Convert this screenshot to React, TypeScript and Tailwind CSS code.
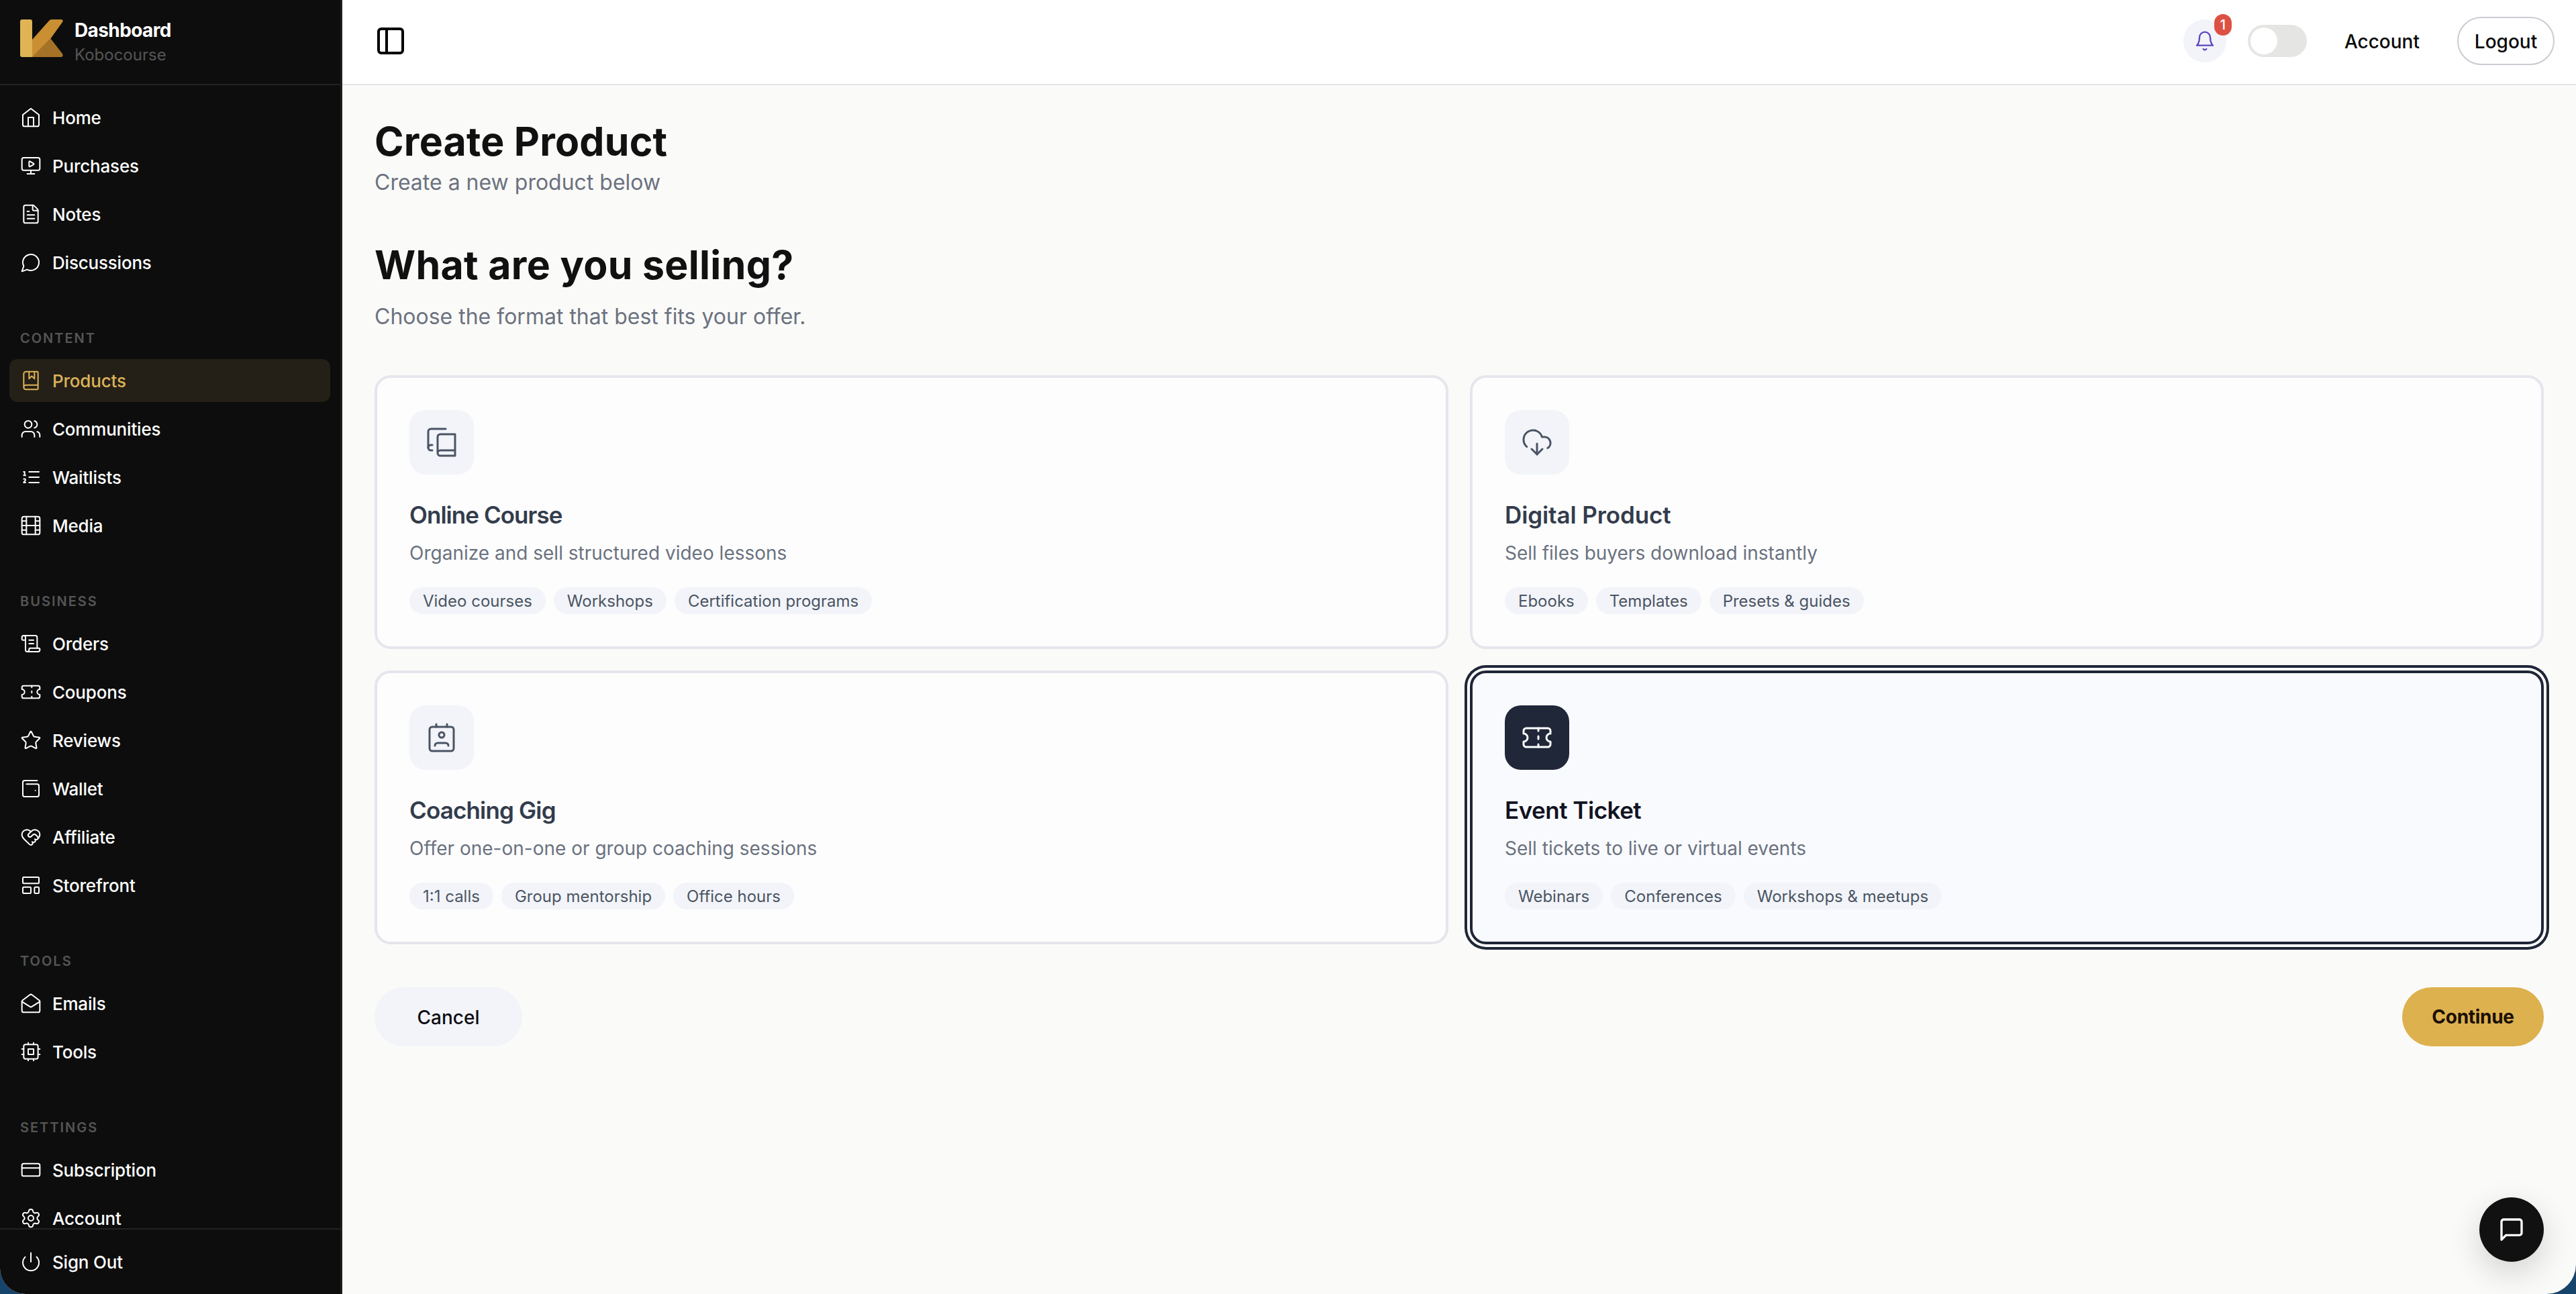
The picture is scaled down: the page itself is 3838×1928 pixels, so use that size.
import type { ReactNode } from 'react';
import {
    BookMarked, CloudDownload, CreditCard, FileText, HeartHandshake, LayoutTemplate,
    MailOpen, MonitorPlay, PanelLeft, Power, ScrollText, Settings, Star, Ticket, Users, WalletMinimal,
} from 'lucide-react';
import { FiBell, FiFilm, FiHome, FiMessageSquare } from 'react-icons/fi';

type IconProps = { className?: string; strokeWidth?: number | string };

function Svg({ className, strokeWidth = 1.5, children }: IconProps & { children: ReactNode }) {
    return (
        <svg viewBox="0 0 24 24" fill="none" stroke="currentColor" strokeWidth={strokeWidth}
        strokeLinecap="round" strokeLinejoin="round" className={className}>
            {children}
        </svg>
    )
}

function Chat(props: IconProps) {
    return <Svg {...props}><path d="M7.9 20A9 9 0 1 0 4 16.1L2 22Z" /></Svg>
}

function Books(props: IconProps) {
    return (
        <Svg {...props}>
            <path d="M2 16V4a2 2 0 0 1 2-2h11" />
            <path d="M5 14H4a2 2 0 1 0 0 4h1" />
            <path d="M22 18H11a2 2 0 1 0 0 4h11V6H11a2 2 0 0 0-2 2v12" />
        </Svg>
    )
}

function OrderedList(props: IconProps) {
    return (
        <Svg {...props}>
            <path d="M10 6h11M10 12h11M10 18h11M4 6h1v4M4 10h2M6 18H4c0-1 2-2 2-3s-1-1.5-2-1" />
        </Svg>
    )
}

function Chip(props: IconProps) {
    return (
        <Svg {...props}>
            <rect x="4" y="4" width="16" height="16" rx="2" />
            <rect x="9" y="9" width="6" height="6" />
            <path d="M15 2v2M15 20v2M2 15h2M2 9h2M20 15h2M20 9h2M9 2v2M9 20v2" />
        </Svg>
    )
}

function ContactCard(props: IconProps) {
    return (
        <Svg {...props}>
            <path d="M17 18a2 2 0 0 0-2-2H9a2 2 0 0 0-2 2M8 2v2M16 2v2" />
            <rect x="3" y="4" width="18" height="18" rx="2" />
            <circle cx="12" cy="10" r="2" />
        </Svg>
    )
}

const groups = [
    {
        label: '',
        items: [
            { name: 'Home', Icon: FiHome },
            { name: 'Purchases', Icon: MonitorPlay },
            { name: 'Notes', Icon: FileText },
            { name: 'Discussions', Icon: Chat },
        ],
    },
    {
        label: 'CONTENT',
        items: [
            { name: 'Products', Icon: BookMarked },
            { name: 'Communities', Icon: Users },
            { name: 'Waitlists', Icon: OrderedList },
            { name: 'Media', Icon: FiFilm },
        ],
    },
    {
        label: 'BUSINESS',
        items: [
            { name: 'Orders', Icon: ScrollText },
            { name: 'Coupons', Icon: Ticket },
            { name: 'Reviews', Icon: Star },
            { name: 'Wallet', Icon: WalletMinimal },
            { name: 'Affiliate', Icon: HeartHandshake },
            { name: 'Storefront', Icon: LayoutTemplate },
        ],
    },
    {
        label: 'TOOLS',
        items: [
            { name: 'Emails', Icon: MailOpen },
            { name: 'Tools', Icon: Chip },
        ],
    },
    {
        label: 'SETTINGS',
        items: [
            { name: 'Subscription', Icon: CreditCard },
            { name: 'Account', Icon: Settings },
        ],
    },
];

const products = [
    {
        title: 'Online Course',
        text: 'Organize and sell structured video lessons',
        tags: ['Video courses', 'Workshops', 'Certification programs'],
        Icon: Books,
        tracking: 'tracking-[-0.95px]',
    },
    {
        title: 'Digital Product',
        text: 'Sell files buyers download instantly',
        tags: ['Ebooks', 'Templates', 'Presets & guides'],
        Icon: CloudDownload,
        tracking: 'tracking-[-0.1px]',
    },
    {
        title: 'Coaching Gig',
        text: 'Offer one-on-one or group coaching sessions',
        tags: ['1:1 calls', 'Group mentorship', 'Office hours'],
        Icon: ContactCard,
        tracking: 'tracking-[-0.85px]',
    },
    {
        title: 'Event Ticket',
        text: 'Sell tickets to live or virtual events',
        tags: ['Webinars', 'Conferences', 'Workshops & meetups'],
        Icon: Ticket,
        tracking: 'tracking-[-0.5px]',
        selected: true,
    },
];

function Logo() {
    return (
        <svg viewBox="0 0 64 56" className="h-14 w-16 shrink-0">
            <path d="M43 2Q44.500 0 47 0H61Q65 0 63 4L45 29L19 56H18V30Z" fill="#c98f32" />
            <path d="M45 28L63 51Q65 56 60 56H18Z" fill="#a57327" />
            <path d="M3 0H15Q18 0 18 3V56H3Q0 56 0 53V3Q0 0 3 0Z" fill="#deb454" />
        </svg>
    )
}

function NavItem({ name, Icon, active }: { name: string; Icon: any; active?: boolean }) {
    return (
        <a className={`flex h-16 shrink-0 items-center gap-4 rounded-xl px-4 text-[26px] font-medium tracking-[-0.2px] ${active ? 'bg-[#242017] text-[#ddb35a]' : 'text-white'}`}>
            <Icon className="size-8 shrink-0" strokeWidth={1.5} />
            <span>{name}</span>
        </a>
    )
}

function Sidebar() {
    return (
        <aside className="flex w-[510px] shrink-0 flex-col border-r-3 border-[#1e1e1e] bg-[#0d0d0d]">
            <div className="flex h-[127px] shrink-0 items-start gap-[17px] border-b-2 border-[#232323] pt-[29px] pl-[30px]">
                <Logo />
                <div className="flex flex-col">
                    <span className="text-[28px] leading-8 font-bold tracking-[-0.6px] text-white">Dashboard</span>
                    <span className="mt-[5px] text-2xl leading-8 text-[#555555]">Kobocourse</span>
                </div>
            </div>
            <nav className="flex min-h-0 flex-1 flex-col overflow-hidden pt-4 pr-[15px] pl-3.5">
                {groups.map((group, i) => (
                    <div key={i} className="flex shrink-0 flex-col">
                        {group.label && (
                            <div className="mt-12 flex h-16 shrink-0 items-center px-4 pt-0.5 text-xl font-semibold tracking-[0.1em] text-[#555555]">
                                {group.label}
                            </div>
                        )}
                        <div className="flex flex-col gap-2">
                            {group.items.map((item) => (
                                <NavItem key={item.name} name={item.name} Icon={item.Icon} active={item.name === 'Products'} />
                            ))}
                        </div>
                    </div>
                ))}
            </nav>
            <div className="h-[98px] shrink-0 border-t-2 border-[#232323] pt-4 pr-[15px] pl-3.5">
                <NavItem name="Sign Out" Icon={Power} />
            </div>
        </aside>
    )
}

function Header() {
    return (
        <header className="flex h-[127px] shrink-0 items-center justify-between border-b-2 border-[#e3e3e5] bg-white pr-8 pb-[3px] pl-12">
            <PanelLeft className="size-12" strokeWidth={2} />
            <div className="flex items-center">
                <div className="relative flex size-16 items-center justify-center rounded-full bg-[#f2f4fa] text-[#6046bd]">
                    <FiBell className="size-8" strokeWidth={1.8} />
                    <span className="absolute -top-2 left-[46px] flex h-8 w-[26px] items-center justify-center rounded-full bg-[#dd5144] text-xl font-medium text-white">1</span>
                </div>
                <div className="ml-8 flex h-12 w-[88px] items-center rounded-full bg-[#e5e5e4] p-1">
                    <div className="size-10 rounded-full bg-white" />
                </div>
                <span className="ml-14 pt-0.5 text-[28px] font-medium text-[#0a0a0a]">Account</span>
                <button className="ml-14 h-[72px] w-[145px] rounded-full border-2 border-[#cbcbd3] pt-0.5 text-[28px] font-medium text-[#0a0a0a]">Logout</button>
            </div>
        </header>
    )
}

function ProductCard({ title, text, tags, Icon, tracking, selected }: { title: string; text: string; tags: string[]; Icon: any; tracking: string; selected?: boolean }) {
    return (
        <div className={`flex h-[408px] flex-col items-start rounded-3xl border-4 p-12 ${selected ? 'border-[#1f2637] bg-[#f9fafe] ring-4 ring-[#1f2637] ring-offset-4 ring-offset-white' : 'border-[#e5e6ed] bg-[#fdfdfd]'}`}>
            <div className={`flex size-24 shrink-0 items-center justify-center rounded-3xl ${selected ? 'bg-[#1f2738] text-white' : 'bg-[#f2f4f9] text-[#4a5464]'}`}>
                <Icon className="size-12" strokeWidth={1.5} />
            </div>
            <h3 className={`mt-8 text-[35px] leading-[56px] font-semibold ${tracking} ${selected ? 'text-[#111322]' : 'text-[#333c4c]'}`}>{title}</h3>
            <p className="mt-[9px] text-[28px] leading-10 text-[#6b7280]">{text}</p>
            <div className="mt-[31px] flex gap-3">
                {tags.map((tag) => (
                    <span key={tag} className="flex h-10 items-center rounded-full bg-[#f2f4f9] px-5 pt-0.5 text-2xl text-[#4b5563]">{tag}</span>
                ))}
            </div>
        </div>
    )
}

export default function App() {
    return (
        <div className="h-[1928px] w-[3838px] bg-[#17446b]">
            <div className="relative flex h-full overflow-hidden rounded-br-[44px] rounded-bl-[38px] bg-[#fafaf8] font-['Inter',sans-serif]">
                <Sidebar />
                <div className="flex flex-1 flex-col">
                    <Header />
                    <main className="flex flex-1 flex-col px-12 pt-12">
                        <h1 className="text-[59px] leading-[72px] font-bold tracking-[0.2px] text-[#111111]">Create Product</h1>
                        <p className="pt-px text-[32px] leading-[47px] text-[#6b7280]">Create a new product below</p>
                        <h2 className="mt-16 text-[59px] leading-[72px] font-bold tracking-[0.3px] text-[#111111]">What are you selling?</h2>
                        <p className="mt-4 pt-px text-[32px] leading-[47px] text-[#6b7280]">Choose the format that best fits your offer.</p>
                        <div className="mt-16 grid grid-cols-2 gap-8">
                            {products.map((product) => (
                                <ProductCard key={product.title} {...product} />
                            ))}
                        </div>
                        <div className="mt-16 flex justify-between">
                            <button className="h-[88px] w-[220px] rounded-full bg-[#f2f4f9] pt-0.5 text-[28px] font-medium text-[#0d0d14]">Cancel</button>
                            <button className="h-[88px] w-[211px] rounded-full bg-[#ddb14e] text-[28px] font-bold tracking-[-0.3px] text-[#1a0f05]">Continue</button>
                        </div>
                    </main>
                </div>
                <button className="absolute right-12 bottom-12 flex size-24 items-center justify-center rounded-full bg-[#111111] text-white shadow-[0_16px_48px_rgba(0,0,0,0.16)]">
                    <FiMessageSquare className="size-10" strokeWidth={2} />
                </button>
            </div>
        </div>
    )
}
